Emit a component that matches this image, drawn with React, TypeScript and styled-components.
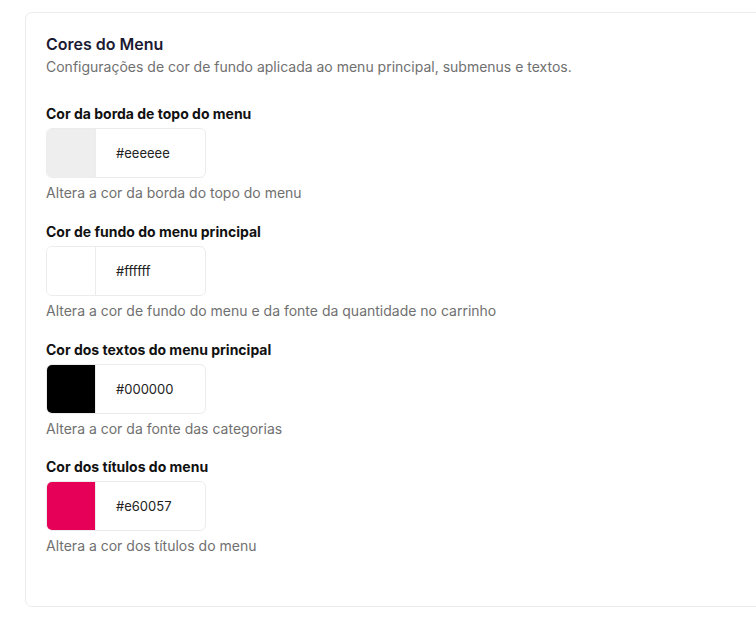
import React from "react";
import styled, { createGlobalStyle } from "styled-components";

const Global = createGlobalStyle`
  html, body { margin: 0; padding: 0; background: #ffffff; overflow: hidden; }
  body { font-family: Inter, "Noto Sans", sans-serif; }
  * { box-sizing: border-box; }
`;

const Page = styled.div`
  padding: 12px 0 0 25px;
  width: 800px;
`;

const Card = styled.section`
  width: 760px;
  border: 1px solid #ececec;
  border-radius: 7px;
  padding: 19px 20px 49.5px 20px;
  background: #fff;
`;

const Title = styled.h2`
  margin: 0;
  font-size: 16px;
  line-height: 24px;
  font-weight: 600;
  color: #1c1a33;
`;

const Subtitle = styled.p`
  margin: 1px 0 0;
  font-size: 14px;
  line-height: 20px;
  color: #707070;
`;

const Fields = styled.div`
  display: flex;
  flex-direction: column;
  gap: 19.8px;
  margin-top: 28px;
`;

const Field = styled.div`
  display: flex;
  flex-direction: column;
`;

const Label = styled.label`
  font-size: 14px;
  line-height: 18px;
  font-weight: 700;
  color: #111;
`;

const InputGroup = styled.div`
  margin-top: 5px;
  width: 160px;
  height: 50px;
  display: flex;
  border: 1px solid #ececec;
  border-radius: 6px;
  overflow: hidden;
`;

const Swatch = styled.div<{ $color: string }>`
  width: 49px;
  flex: none;
  background: ${(p) => p.$color};
  border-right: 1px solid #ececec;
`;

const Value = styled.span`
  display: flex;
  align-items: center;
  padding-left: 20px;
  font-size: 13px;
  color: #222;
`;

const Help = styled.p`
  margin: 5px 0 0;
  font-size: 14px;
  line-height: 20px;
  color: #707070;
`;

const items = [
  { label: "Cor da borda de topo do menu", color: "#eeeeee", help: "Altera a cor da borda do topo do menu" },
  { label: "Cor de fundo do menu principal", color: "#ffffff", help: "Altera a cor de fundo do menu e da fonte da quantidade no carrinho" },
  { label: "Cor dos textos do menu principal", color: "#000000", help: "Altera a cor da fonte das categorias" },
  { label: "Cor dos títulos do menu", color: "#e60057", help: "Altera a cor dos títulos do menu" },
];

export default function App() {
  return (
    <>
      <Global />
      <Page>
        <Card>
          <Title>Cores do Menu</Title>
          <Subtitle>Configurações de cor de fundo aplicada ao menu principal, submenus e textos.</Subtitle>
          <Fields>
            {items.map((it) => (
              <Field key={it.label}>
                <Label>{it.label}</Label>
                <InputGroup>
                  <Swatch $color={it.color} />
                  <Value>{it.color}</Value>
                </InputGroup>
                <Help>{it.help}</Help>
              </Field>
            ))}
          </Fields>
        </Card>
      </Page>
    </>
  );
}
